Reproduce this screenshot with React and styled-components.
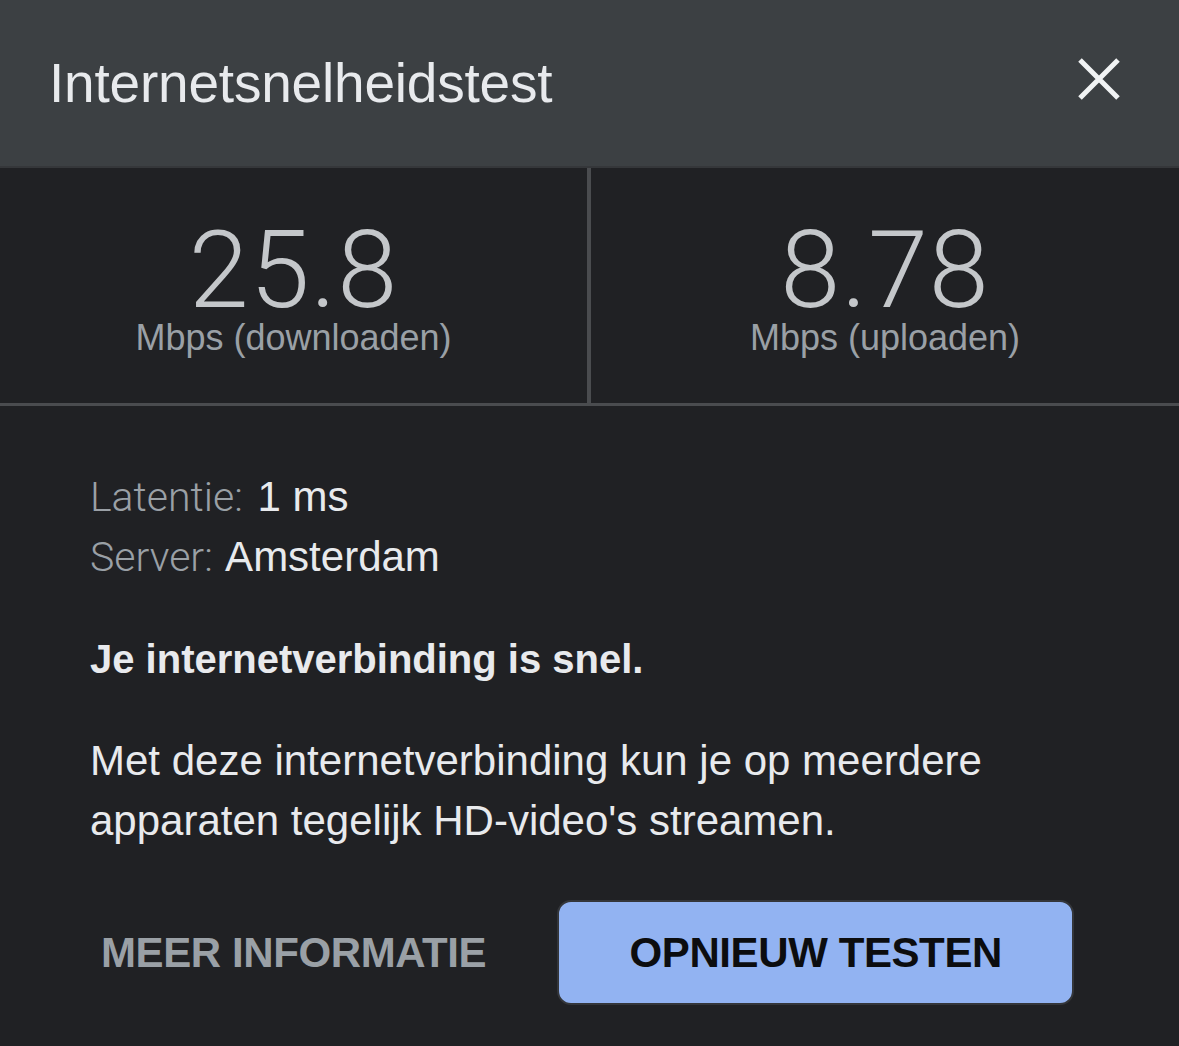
import styled, { createGlobalStyle } from 'styled-components'

const GlobalStyle = createGlobalStyle`
	html, body {
		margin: 0;
		padding: 0;
		background: #202124;
	}
	body {
		font-family: 'Liberation Sans', Arial, sans-serif;
	}
`

const Dialog = styled.div`
	width: 1179px;
	height: 1046px;
	background: #202124;
	display: flex;
	flex-direction: column;
	overflow: hidden;
`

const Header = styled.header`
	height: 168px;
	box-sizing: border-box;
	background: #3c4043;
	border-bottom: 2px solid #35373a;
	display: flex;
	align-items: center;
	justify-content: space-between;
	padding: 0 58px 0 49px;
`

const Title = styled.h1`
	margin: 0;
	font-size: 55px;
	font-weight: 400;
	color: #e8eaed;
	letter-spacing: -0.2px;
`

const CloseButton = styled.button`
	background: none;
	border: none;
	padding: 0;
	width: 44px;
	height: 44px;
	display: flex;
	align-items: center;
	justify-content: center;
	margin-bottom: 8px;
	cursor: pointer;

	svg {
		width: 44px;
		height: 44px;
	}
`

const Stats = styled.div`
	display: grid;
	grid-template-columns: 587px 1fr;
	height: 235px;
	border-bottom: 3px solid #4a4c4f;
`

const Stat = styled.div`
	display: flex;
	flex-direction: column;
	align-items: center;
	padding-top: 52px;
	box-sizing: border-box;
	border-left: ${(p) => (p.divided ? '4px solid #4a4c4f' : 'none')};
`

const Value = styled.div`
	font-family: Roboto, 'Liberation Sans', sans-serif;
	font-size: 108px;
	font-weight: 300;
	line-height: 100px;
	color: #c4c7ca;
	letter-spacing: 1px;
`

const Unit = styled.div`
	font-size: 36px;
	line-height: 36px;
	color: #9aa0a6;
`

const Body = styled.div`
	padding: 61px 0 0 90px;
	display: flex;
	flex-direction: column;
`

const InfoLine = styled.div`
	font-size: 42px;
	line-height: 60px;
	color: #e8eaed;

	span {
		font-family: Roboto, 'Liberation Sans', sans-serif;
		font-size: 41px;
		color: #9aa0a6;
		font-weight: 300;
		margin-right: 3px;
	}
`

const Verdict = styled.p`
	margin: 42px 0 0;
	font-size: 40px;
	line-height: 60px;
	font-weight: 700;
	color: #e8eaed;
`

const Description = styled.p`
	margin: 42px 0 0;
	font-size: 42px;
	line-height: 60px;
	color: #e8eaed;
	max-width: 1000px;
`

const Actions = styled.div`
	display: flex;
	align-items: center;
	margin-top: 49px;
	padding-left: 11px;
	gap: 71px;
`

const TextButton = styled.button`
	background: none;
	border: none;
	padding: 0;
	font-family: 'Liberation Sans', Arial, sans-serif;
	font-size: 42px;
	font-weight: 700;
	color: #9aa0a6;
	letter-spacing: -0.4px;
	cursor: pointer;
`

const PrimaryButton = styled.button`
	width: 517px;
	height: 105px;
	box-sizing: border-box;
	background: #92b3f2;
	border: 2px solid #34363a;
	border-radius: 14px;
	font-family: 'Liberation Sans', Arial, sans-serif;
	font-size: 42px;
	font-weight: 700;
	color: #0c0d0f;
	letter-spacing: -0.4px;
	cursor: pointer;
`

export default function App() {
	return (
		<>
			<GlobalStyle />
			<Dialog>
				<Header>
					<Title>Internetsnelheidstest</Title>
					<CloseButton aria-label='Sluiten'>
						<svg viewBox='0 0 44 44'>
							<path
								d='M3 3L41 41M41 3L3 41'
								stroke='#f1f3f4'
								strokeWidth='5'
								fill='none'
							/>
						</svg>
					</CloseButton>
				</Header>
				<Stats>
					<Stat>
						<Value>25.8</Value>
						<Unit>Mbps (downloaden)</Unit>
					</Stat>
					<Stat divided>
						<Value>8.78</Value>
						<Unit>Mbps (uploaden)</Unit>
					</Stat>
				</Stats>
				<Body>
					<InfoLine>
						<span>Latentie:</span> 1 ms
					</InfoLine>
					<InfoLine>
						<span>Server:</span> Amsterdam
					</InfoLine>
					<Verdict>Je internetverbinding is snel.</Verdict>
					<Description>
						Met deze internetverbinding kun je op meerdere apparaten tegelijk
						HD-video's streamen.
					</Description>
					<Actions>
						<TextButton>MEER INFORMATIE</TextButton>
						<PrimaryButton>OPNIEUW TESTEN</PrimaryButton>
					</Actions>
				</Body>
			</Dialog>
		</>
	)
}
